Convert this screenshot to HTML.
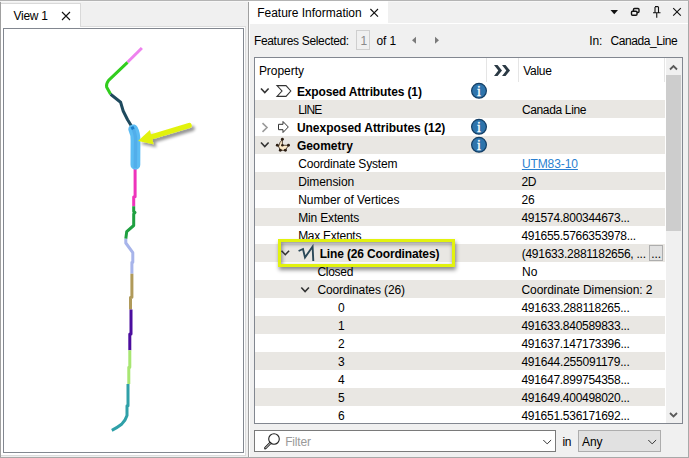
<!DOCTYPE html>
<html><head><meta charset="utf-8"><title>Feature Information</title>
<style>
html,body{margin:0;padding:0}
body{width:689px;height:458px;position:relative;overflow:hidden;background:#f0f0f0;font:12px "Liberation Sans",sans-serif;color:#000}
div,span,svg{position:absolute;box-sizing:border-box}
.t{white-space:pre;line-height:14px;height:14px}
.row{left:255px;width:410px}
</style></head><body>
<!-- outer screenshot edges -->
<div style="left:0;top:0;width:689px;height:1px;background:#b4b4b4"></div>
<div style="left:0;top:2px;width:1px;height:456px;background:#a0a0a0"></div>
<div style="left:0;top:457px;width:689px;height:1px;background:#a8a8a8"></div>
<div style="left:688px;top:1px;width:1px;height:457px;background:#a9a9a9"></div>

<div style="left:1px;top:1px;width:687px;height:1px;background:#f7f7f7"></div>
<!-- left panel: white page -->
<div style="left:1px;top:26px;width:245px;height:430px;background:#fff;border-right:1px solid #dcdcdc;border-bottom:1px solid #dcdcdc"></div>
<!-- tab strip bottom line -->
<div style="left:80px;top:26px;width:166px;height:1px;background:#dcdcdc"></div>
<!-- tab -->
<div style="left:1px;top:3px;width:80px;height:24px;background:#fff;border-top:1px solid #d9d9d9;border-right:1px solid #d9d9d9"></div>
<!-- view frame -->
<div style="left:3px;top:28px;width:241px;height:425px;background:#fff;border:1px solid #828790"></div>

<!-- splitter line -->
<div style="left:248px;top:2px;width:1px;height:455px;background:#a0a0a0"></div>
<div style="left:249px;top:2px;width:1px;height:455px;background:#fff"></div>

<!-- right panel tab -->
<div style="left:249px;top:1px;width:139px;height:23px;background:#fff"></div>
<div style="left:388px;top:23px;width:300px;height:1px;background:#fff"></div>

<!-- "1" box -->
<div style="left:356px;top:30px;width:14px;height:20px;border:1px solid #cfcfcf;background:#f0f0f0"></div>

<!-- table frame -->
<div style="left:254px;top:57px;width:429px;height:367px;background:#fff;border:1px solid #828790"></div>
<div class="row" style="top:82px;height:18px;background:#fff"></div>
<div class="row" style="top:100px;height:18px;background:#e9e7e3"></div>
<div class="row" style="top:118px;height:18px;background:#fff"></div>
<div class="row" style="top:136px;height:18px;background:#e9e7e3"></div>
<div class="row" style="top:154px;height:18px;background:#fff"></div>
<div class="row" style="top:172px;height:18px;background:#e9e7e3"></div>
<div class="row" style="top:190px;height:18px;background:#fff"></div>
<div class="row" style="top:208px;height:18px;background:#e9e7e3"></div>
<div class="row" style="top:226px;height:18px;background:#fff"></div>
<div class="row" style="top:244px;height:18px;background:#e9e7e3"></div>
<div class="row" style="top:262px;height:18px;background:#fff"></div>
<div class="row" style="top:280px;height:18px;background:#e9e7e3"></div>
<div class="row" style="top:298px;height:18px;background:#fff"></div>
<div class="row" style="top:316px;height:18px;background:#e9e7e3"></div>
<div class="row" style="top:334px;height:18px;background:#fff"></div>
<div class="row" style="top:352px;height:18px;background:#e9e7e3"></div>
<div class="row" style="top:370px;height:18px;background:#fff"></div>
<div class="row" style="top:388px;height:18px;background:#e9e7e3"></div>
<div class="row" style="top:406px;height:17px;background:#fff"></div>
<!-- header separators -->
<div style="left:486px;top:58px;width:1px;height:24px;background:#e5e5e5"></div>
<div style="left:518px;top:58px;width:1px;height:24px;background:#e5e5e5"></div>
<div style="left:664px;top:58px;width:1px;height:24px;background:#e5e5e5"></div>
<!-- scrollbar -->
<div style="left:666px;top:58px;width:16px;height:365px;background:#f0f0f0"></div>
<div style="left:666px;top:75px;width:15px;height:156px;background:#cdcdcd"></div>

<!-- ... button -->
<div style="left:649px;top:245px;width:14px;height:16px;background:#e1e1e1;border:1px solid #adadad"></div>


<!-- filter input -->
<div style="left:254px;top:430px;width:302px;height:22px;background:#fff;border:1px solid #7a7a7a"></div>
<!-- Any combo -->
<div style="left:578px;top:430px;width:83px;height:22px;background:#e1e1e1;border:1px solid #adadad"></div>

<span class="t" style="left:13.60px;top:9.00px;letter-spacing:-0.302px;">View 1</span>
<span class="t" style="left:257.20px;top:6.00px;letter-spacing:-0.012px;">Feature Information</span>
<span class="t" style="left:253.90px;top:34.00px;letter-spacing:-0.319px;">Features Selected:</span>
<span class="t" style="left:360.50px;top:34.00px;letter-spacing:-2.188px;color:#8a8a8a">1</span>
<span class="t" style="left:376.40px;top:34.00px;letter-spacing:-0.079px;">of 1</span>
<span class="t" style="left:589.20px;top:34.00px;letter-spacing:-0.115px;">In:</span>
<span class="t" style="left:610.40px;top:34.00px;letter-spacing:-0.410px;">Canada_Line</span>
<span class="t" style="left:258.90px;top:64.00px;letter-spacing:-0.032px;">Property</span>
<span class="t" style="left:523.15px;top:64.00px;letter-spacing:-0.263px;">Value</span>
<span class="t" style="left:296.90px;top:85.00px;letter-spacing:-0.122px;font-weight:bold">Exposed Attributes (1)</span>
<span class="t" style="left:298.15px;top:103.00px;letter-spacing:-0.859px;">LINE</span>
<span class="t" style="left:296.90px;top:121.00px;letter-spacing:-0.021px;font-weight:bold">Unexposed Attributes (12)</span>
<span class="t" style="left:296.90px;top:139.00px;letter-spacing:-0.016px;font-weight:bold">Geometry</span>
<span class="t" style="left:298.15px;top:157.00px;letter-spacing:-0.165px;">Coordinate System</span>
<span class="t" style="left:298.15px;top:175.00px;letter-spacing:-0.078px;">Dimension</span>
<span class="t" style="left:298.15px;top:193.00px;letter-spacing:-0.044px;">Number of Vertices</span>
<span class="t" style="left:298.15px;top:211.00px;letter-spacing:-0.155px;">Min Extents</span>
<span class="t" style="left:298.15px;top:229.00px;letter-spacing:-0.276px;">Max Extents</span>
<span class="t" style="left:319.65px;top:247.00px;letter-spacing:-0.145px;font-weight:bold">Line (26 Coordinates)</span>
<span class="t" style="left:317.40px;top:265.00px;letter-spacing:-0.268px;">Closed</span>
<span class="t" style="left:317.40px;top:283.00px;letter-spacing:-0.118px;">Coordinates (26)</span>
<span class="t" style="left:338.10px;top:301.00px;letter-spacing:-0.287px;">0</span>
<span class="t" style="left:338.10px;top:319.00px;letter-spacing:-0.287px;">1</span>
<span class="t" style="left:338.10px;top:337.00px;letter-spacing:-0.287px;">2</span>
<span class="t" style="left:338.10px;top:355.00px;letter-spacing:-0.287px;">3</span>
<span class="t" style="left:338.10px;top:373.00px;letter-spacing:-0.287px;">4</span>
<span class="t" style="left:338.10px;top:391.00px;letter-spacing:-0.287px;">5</span>
<span class="t" style="left:338.10px;top:409.00px;letter-spacing:-0.287px;">6</span>
<span class="t" style="left:521.90px;top:103.00px;letter-spacing:-0.347px;">Canada Line</span>
<span class="t" style="left:521.90px;top:157.00px;letter-spacing:-0.086px;color:#2a7fd0;text-decoration:underline">UTM83-10</span>
<span class="t" style="left:521.40px;top:175.00px;letter-spacing:-0.422px;">2D</span>
<span class="t" style="left:521.40px;top:193.00px;letter-spacing:-0.130px;">26</span>
<span class="t" style="left:521.40px;top:211.00px;letter-spacing:-0.276px;">491574.800344673...</span>
<span class="t" style="left:521.40px;top:229.00px;letter-spacing:-0.281px;">491655.5766353978...</span>
<span class="t" style="left:521.70px;top:247.00px;letter-spacing:-0.252px;">(491633.2881182656, ...</span>
<span class="t" style="left:521.90px;top:265.00px;letter-spacing:0.078px;">No</span>
<span class="t" style="left:521.40px;top:283.00px;letter-spacing:-0.043px;">Coordinate Dimension: 2</span>
<span class="t" style="left:521.40px;top:301.00px;letter-spacing:-0.230px;">491633.288118265...</span>
<span class="t" style="left:521.40px;top:319.00px;letter-spacing:-0.276px;">491633.840589833...</span>
<span class="t" style="left:521.40px;top:337.00px;letter-spacing:-0.276px;">491637.147173396...</span>
<span class="t" style="left:521.40px;top:355.00px;letter-spacing:-0.230px;">491644.255091179...</span>
<span class="t" style="left:521.40px;top:373.00px;letter-spacing:-0.276px;">491647.899754358...</span>
<span class="t" style="left:521.40px;top:391.00px;letter-spacing:-0.276px;">491649.400498020...</span>
<span class="t" style="left:521.40px;top:409.00px;letter-spacing:-0.276px;">491651.536171692...</span>
<span class="t" style="left:285.15px;top:435.10px;letter-spacing:-0.145px;color:#9a9a9a">Filter</span>
<span class="t" style="left:562.40px;top:435.10px;letter-spacing:-0.422px;">in</span>
<span class="t" style="left:582.00px;top:435.10px;letter-spacing:-0.062px;">Any</span>
<span class="t" style="left:651.30px;top:247.00px;letter-spacing:-0.105px;">...</span>
<!-- yellow highlight box -->
<div style="left:278px;top:239px;width:177px;height:28px;border:3px solid #e2f20e;box-shadow:1px 3px 4px rgba(0,0,0,.45), inset 1px 2px 4px rgba(0,0,0,.45)"></div>

<svg width="689" height="458" viewBox="0 0 689 458" style="left:0;top:0" fill="none">
<defs>
<filter id="sh" x="-20%" y="-40%" width="140%" height="200%"><feGaussianBlur in="SourceAlpha" stdDeviation="1.7"/><feOffset dx="2.5" dy="3"/><feComponentTransfer><feFuncA type="linear" slope="0.42"/></feComponentTransfer><feMerge><feMergeNode/><feMergeNode in="SourceGraphic"/></feMerge></filter>
</defs>
<!-- map lines -->
<g stroke-width="3" stroke-linejoin="round" stroke-linecap="butt">
<path d="M141.9,48 L127.5,62.3" stroke="#ee82ee"/>
<path d="M127.5,62.3 L108.6,80.4 Q106,83.8 106.6,87 L110.6,94.3" stroke="#32cd1e"/>
<path d="M110.6,94.3 L120.6,102.2 L123.2,111 L127.6,119.7 L131.9,126.7" stroke="#1f4a5e"/>
<path d="M135.1,169 L135.1,196.7 L133.7,197 L133.7,206.3" stroke="#ee33bb"/>
<path d="M133.7,206.3 L133.7,211.5 L135,212.5 L133.7,214 L133.7,225.5 L126.7,231.6 L125.8,238.7" stroke="#1fa040"/>
<path d="M125.8,238.7 L125.8,243 L132.8,252.7 L132.8,262.3 L131.9,262.3 L131.9,273.7" stroke="#a7b4ea"/>
<path d="M131.9,273.7 L131.9,297.2 L130.5,297.5 L130.5,309.6" stroke="#b09a5a"/>
<path d="M131,309.6 L131,334 L129.8,334 L129.8,350.3" stroke="#4b0d9e"/>
<path d="M129.8,350.3 L129.8,367.2 L128.8,367.2 L128.8,384" stroke="#a8e672"/>
<path d="M128,384 L128,405.8 L127,405.8 L127,415.5 Q125.5,420.5 121.6,424.3 Q117.5,427.5 111.8,430.3" stroke="#2fa0a8"/>
</g>
<!-- selected highlight -->
<path d="M133.2,129.3 Q135.7,134 135.5,141 L135.4,164.8" stroke="#5cbcf3" stroke-width="9.8" stroke-linecap="round"/>
<path d="M131.9,126.7 Q136,134 135.6,142 L135.3,168" stroke="#52aeea" stroke-width="3.4" stroke-linecap="butt"/>
<path d="M131.9,126.7 L133.3,129.3" stroke="#1a7ec8" stroke-width="3" stroke-linecap="butt"/>
<!-- yellow arrow -->
<g filter="url(#sh)">
<path d="M189.2,125.5 L151,137" stroke="#e2f20e" stroke-width="5.2" stroke-linecap="round"/>
<path d="M138,141 L149.9,130 L153.6,144.3 Z" fill="#e2f20e"/>
</g>

<!-- tab close X (left) -->
<path d="M62,12 L70,20 M70,12 L62,20" stroke="#111" stroke-width="1.1"/>
<!-- tab close X (right tab) -->
<path d="M370.4,9 L378,16.6 M378,9 L370.4,16.6" stroke="#111" stroke-width="1.1"/>
<!-- title bar icons -->
<path d="M610.5,10 L618,10 L614.25,14.3 Z" fill="#111"/>
<g stroke="#111" stroke-width="1.4"><rect x="633.5" y="8.5" width="5.5" height="4" rx="1"/><rect x="631.5" y="11.3" width="5.5" height="4" rx="1" fill="#f0f0f0"/></g>
<g stroke="#111" stroke-width="1.1"><path d="M655,7 L655,12.5 M658.5,7 L658.5,12.5 M655,6.6 L658.5,6.6 M653,12.7 L660.5,12.7 M656.75,12.7 L656.75,17.7"/></g>
<path d="M673.2,8.1 L680.8,15.7 M680.8,8.1 L673.2,15.7" stroke="#111" stroke-width="1.1"/>
<!-- nav arrows -->
<path d="M416,36.7 L416,43.7 L412,40.2 Z" fill="#7a7a7a"/>
<path d="M435,36.7 L435,43.7 L439,40.2 Z" fill="#7a7a7a"/>
<!-- header >> -->
<g fill="#2b3a45"><path d="M494,65 L497.5,65 L502,70.5 L497.5,76 L494,76 L498.3,70.5 Z"/><path d="M502,65 L505.5,65 L510,70.5 L505.5,76 L502,76 L506.3,70.5 Z"/></g>
<!-- scrollbar arrows -->
<path d="M670,69.5 L673.5,66 L677,69.5" stroke="#5a5a5a" stroke-width="1.8"/>
<path d="M670,413 L673.5,416.5 L677,413" stroke="#5a5a5a" stroke-width="1.8"/>
<!-- tree chevrons -->
<g stroke="#333" stroke-width="1.6">
<path d="M261,88.5 L264.8,92.5 L268.6,88.5"/>
<path d="M261,142.5 L264.8,146.5 L268.6,142.5"/>
<path d="M281.5,250.7 L285.3,254.7 L289.1,250.7"/>
<path d="M301.3,287.5 L305.1,291.5 L308.9,287.5"/>
</g>
<path d="M262.5,123.2 L267,127.5 L262.5,131.8" stroke="#9a9a9a" stroke-width="1.6"/>
<!-- exposed icon -->
<path d="M277,85.6 L286,85.6 L290.8,91 L286,96.4 L277,96.4 L282,91 Z" stroke="#333" stroke-width="1.1"/>
<!-- unexposed icon -->
<path d="M278.5,124.3 L283,124.3 L283,121.5 L288.3,127 L283,132.5 L283,129.7 L278.5,129.7 Z" stroke="#333" stroke-width="1"/>
<!-- geometry icon -->
<g>
<path d="M282.4,139.3 L282.4,145.3 L288.5,145.3 L285.4,150.3 L280.3,150.3 L278.6,146.5 Q279.5,142 282.4,139.3 Z" fill="#fbe9c8" stroke="#3a2a1a" stroke-width="0.8"/>
<path d="M277.3,145.3 L279,146.5" stroke="#3a2a1a" stroke-width="0.8"/>
<g fill="#2a1c10"><circle cx="282.4" cy="139.3" r="1.45"/><circle cx="277.3" cy="145.3" r="1.45"/><circle cx="288.5" cy="145.3" r="1.45"/><circle cx="280.3" cy="150.3" r="1.45"/><circle cx="285.4" cy="150.3" r="1.45"/><circle cx="282.4" cy="145.3" r="1.3"/></g>
</g>
<!-- line icon -->
<path d="M298.6,251 L303,249 L305,257.5 L312.6,246.5 L313.3,261" stroke="#2a4858" stroke-width="1.9" stroke-linejoin="miter"/>
<!-- info icons -->
<g><circle cx="479" cy="90.8" r="7.4" fill="#2e74ac" stroke="#143f66" stroke-width="1.2"/><text x="479" y="95.8" text-anchor="middle" font-family="Liberation Serif, serif" font-size="14" fill="#fff" stroke="#fff" stroke-width="0.35">i</text></g>
<g><circle cx="479" cy="126.8" r="7.4" fill="#2e74ac" stroke="#143f66" stroke-width="1.2"/><text x="479" y="131.8" text-anchor="middle" font-family="Liberation Serif, serif" font-size="14" fill="#fff" stroke="#fff" stroke-width="0.35">i</text></g>
<g><circle cx="479" cy="144.8" r="7.4" fill="#2e74ac" stroke="#143f66" stroke-width="1.2"/><text x="479" y="149.8" text-anchor="middle" font-family="Liberation Serif, serif" font-size="14" fill="#fff" stroke="#fff" stroke-width="0.35">i</text></g>

<!-- magnifier -->
<circle cx="274" cy="439" r="5.3" stroke="#222" stroke-width="1.1"/>
<path d="M270.2,443.2 L265.3,448.2" stroke="#222" stroke-width="2.6" stroke-linecap="round"/>
<path d="M270,443.4 L265.5,448" stroke="#fff" stroke-width="0.9" stroke-linecap="round"/>
<!-- combo chevrons -->
<path d="M543.3,440 L547.2,443.9 L551.1,440" stroke="#333" stroke-width="1"/>
<path d="M648.3,440 L652.2,443.9 L656.1,440" stroke="#333" stroke-width="1"/>
</svg>

</body></html>
